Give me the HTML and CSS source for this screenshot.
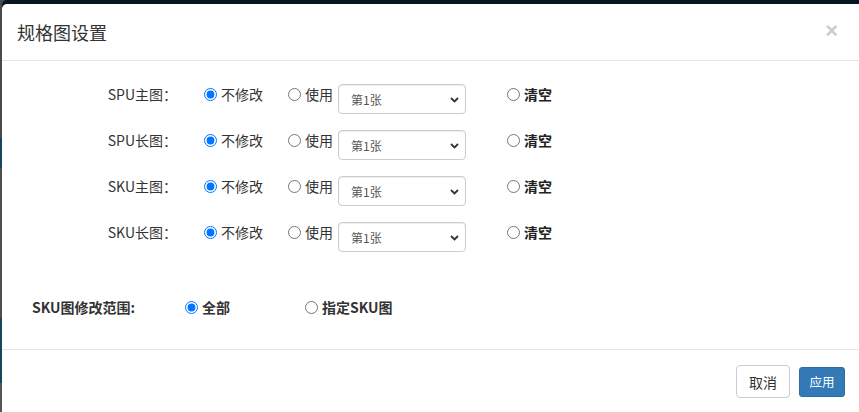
FILE: index.html
```html
<!DOCTYPE html>
<html lang="zh-CN">
<head>
<meta charset="utf-8">
<title>规格图设置</title>
<link rel="stylesheet" href="styles.css">
</head>
<body>
<div class="modal">
  <div class="modal-header">
    <h4 class="modal-title">规格图设置</h4>
    <span class="close">×</span>
  </div>
  <div class="modal-body">
    <div class="form-row">
      <span class="row-label">SPU主图：</span>
      <label class="opt opt-keep"><input type="radio" name="r1" checked><span>不修改</span></label>
      <label class="opt opt-use"><input type="radio" name="r1"><span>使用</span></label>
      <div class="select-wrap"><select class="select"><option>第1张</option></select><svg class="chev" width="9" height="6" viewBox="0 0 9 6"><path d="M1 1 L4.5 4.5 L8 1" fill="none" stroke="#333" stroke-width="1.8"/></svg></div>
      <label class="opt opt-clear"><input type="radio" name="r1"><span>清空</span></label>
    </div>
    <div class="form-row">
      <span class="row-label">SPU长图：</span>
      <label class="opt opt-keep"><input type="radio" name="r2" checked><span>不修改</span></label>
      <label class="opt opt-use"><input type="radio" name="r2"><span>使用</span></label>
      <div class="select-wrap"><select class="select"><option>第1张</option></select><svg class="chev" width="9" height="6" viewBox="0 0 9 6"><path d="M1 1 L4.5 4.5 L8 1" fill="none" stroke="#333" stroke-width="1.8"/></svg></div>
      <label class="opt opt-clear"><input type="radio" name="r2"><span>清空</span></label>
    </div>
    <div class="form-row">
      <span class="row-label">SKU主图：</span>
      <label class="opt opt-keep"><input type="radio" name="r3" checked><span>不修改</span></label>
      <label class="opt opt-use"><input type="radio" name="r3"><span>使用</span></label>
      <div class="select-wrap"><select class="select"><option>第1张</option></select><svg class="chev" width="9" height="6" viewBox="0 0 9 6"><path d="M1 1 L4.5 4.5 L8 1" fill="none" stroke="#333" stroke-width="1.8"/></svg></div>
      <label class="opt opt-clear"><input type="radio" name="r3"><span>清空</span></label>
    </div>
    <div class="form-row">
      <span class="row-label">SKU长图：</span>
      <label class="opt opt-keep"><input type="radio" name="r4" checked><span>不修改</span></label>
      <label class="opt opt-use"><input type="radio" name="r4"><span>使用</span></label>
      <div class="select-wrap"><select class="select"><option>第1张</option></select><svg class="chev" width="9" height="6" viewBox="0 0 9 6"><path d="M1 1 L4.5 4.5 L8 1" fill="none" stroke="#333" stroke-width="1.8"/></svg></div>
      <label class="opt opt-clear"><input type="radio" name="r4"><span>清空</span></label>
    </div>
    <div class="scope-row">
      <span class="scope-label">SKU图修改范围:</span>
      <label class="opt opt-all"><input type="radio" name="scope" checked><span>全部</span></label>
      <label class="opt"><input type="radio" name="scope"><span>指定SKU图</span></label>
    </div>
  </div>
  <div class="modal-footer">
    <button class="btn btn-default">取消</button>
    <button class="btn btn-primary">应用</button>
  </div>
</div>
</body>
</html>
```
FILE: styles.css
```css
html, body {
  margin: 0;
  padding: 0;
}
body {
  width: 859px;
  height: 412px;
  overflow: hidden;
  background: linear-gradient(to bottom, #4a4a4a 0, #4a4a4a 138px, #13475a 138px, #13475a 168px, #4e4e4e 168px, #4e4e4e 318px, #13475a 318px, #13475a 383px, #555 383px);
  font-family: "Noto Sans CJK SC", "Noto Sans", sans-serif;
  color: #333;
}
.modal {
  margin: 4px 0 0 2px;
  width: 858px;
  height: 420px;
  background: #fff;
  border-radius: 5px 0 0 0;
  box-shadow: 0 -4px 0 #07161e;
}
.modal-header {
  height: 56px;
  padding: 0 15px;
  display: flex;
  align-items: center;
  justify-content: space-between;
  border-bottom: 1px solid #e5e5e5;
}
.modal-title {
  margin: 0;
  font-size: 18px;
  font-weight: normal;
  line-height: 26px;
  color: #333;
}
.close {
  font-family: "Liberation Sans", sans-serif;
  font-size: 22px;
  font-weight: bold;
  color: #000;
  opacity: 0.2;
  margin-right: 7px;
  line-height: 1;
  margin-top: -2px;
}
.modal-body {
  padding: 23px 0 31px 0;
}
.form-row {
  display: flex;
  align-items: flex-start;
  height: 46px;
  font-size: 14px;
}
.row-label {
  width: 175px;
  text-align: right;
  line-height: 21px;
  color: #333;
}
.opt {
  display: flex;
  align-items: center;
  gap: 4px;
  height: 21px;
  line-height: 21px;
  white-space: nowrap;
}
.opt input {
  margin: 0;
  width: 13px;
  height: 13px;
  flex: none;
}
.opt-keep {
  margin-left: 27px;
  width: 84px;
}
.opt-use {
  margin-right: 5px;
}
.opt-clear {
  margin-left: 41px;
  font-weight: bold;
  color: #222;
}
.select-wrap {
  position: relative;
  width: 128px;
  height: 30px;
}
.select {
  appearance: none;
  -webkit-appearance: none;
  width: 128px;
  height: 30px;
  box-sizing: border-box;
  border: 1px solid #ccc;
  border-radius: 4px;
  background: #fff;
  padding: 0 0 0 12px;
  font-family: "Noto Sans CJK SC", sans-serif;
  font-size: 12px;
  color: #555;
  box-shadow: inset 0 1px 1px rgba(0,0,0,0.075);
}
.chev {
  position: absolute;
  right: 7px;
  top: 13px;
  pointer-events: none;
}
.scope-row {
  display: flex;
  align-items: center;
  margin-top: 28px;
  padding-left: 30px;
  height: 22px;
  font-size: 14px;
  font-weight: bold;
  color: #333;
}
.scope-label {
  width: 153px;
}
.opt-all {
  width: 120px;
}
.modal-footer {
  border-top: 1px solid #e5e5e5;
  padding: 15px 15px 0 0;
  display: flex;
  justify-content: flex-end;
  align-items: center;
  gap: 9px;
}
.btn {
  font-family: "Noto Sans CJK SC", sans-serif;
  border-radius: 4px;
  cursor: pointer;
  padding: 0;
}
.btn-default {
  width: 54px;
  height: 33px;
  border: 1px solid #ccc;
  background: #fff;
  color: #333;
  font-size: 14px;
}
.btn-primary {
  width: 46px;
  height: 30px;
  border: 1px solid #2e6da4;
  background: #337ab7;
  color: #fff;
  font-size: 12.5px;
  border-radius: 3px;
}
```
